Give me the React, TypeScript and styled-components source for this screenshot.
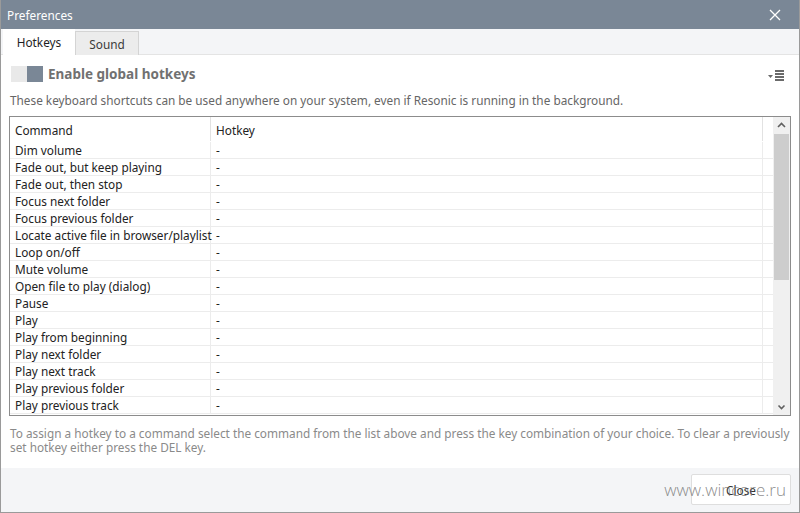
import styled, { createGlobalStyle } from "styled-components";

const GlobalStyle = createGlobalStyle`
  html, body {
    margin: 0;
    padding: 0;
    background: #ffffff;
  }
  body {
    font-family: "Noto Sans", "Open Sans", sans-serif;
  }
`;

const commands = [
  "Dim volume",
  "Fade out, but keep playing",
  "Fade out, then stop",
  "Focus next folder",
  "Focus previous folder",
  "Locate active file in browser/playlist",
  "Loop on/off",
  "Mute volume",
  "Open file to play (dialog)",
  "Pause",
  "Play",
  "Play from beginning",
  "Play next folder",
  "Play next track",
  "Play previous folder",
  "Play previous track",
];

const App = () => {
  return (
    <>
      <GlobalStyle />
      <Window>
        <TitleBar>
          <Title>Preferences</Title>
          <CloseX viewBox="0 0 12 12">
            <path d="M1 1 L11 11 M11 1 L1 11" />
          </CloseX>
        </TitleBar>
        <TabStrip>
          <Tab $active>Hotkeys</Tab>
          <Tab>Sound</Tab>
        </TabStrip>
        <Body>
          <HeadRow>
            <Toggle>
              <ToggleOff />
              <ToggleOn />
            </Toggle>
            <HeadLabel>Enable global hotkeys</HeadLabel>
            <MenuIcon viewBox="0 0 17 12">
              <path d="M0 5 L5 5 L2.5 8 Z" />
              <rect x="7" y="0" width="9" height="2" />
              <rect x="7" y="3" width="9" height="2" />
              <rect x="7" y="6" width="9" height="2" />
              <rect x="7" y="9" width="9" height="2" />
            </MenuIcon>
          </HeadRow>
          <Description>
            These keyboard shortcuts can be used anywhere on your system, even
            if Resonic is running in the background.
          </Description>
          <Table>
            <List>
              <HeaderRow>
                <HeaderCell $divider>Command</HeaderCell>
                <HeaderCell>Hotkey</HeaderCell>
              </HeaderRow>
              {commands.map((c) => (
                <Row key={c}>
                  <Cell $divider>{c}</Cell>
                  <Cell>-</Cell>
                </Row>
              ))}
            </List>
            <Scrollbar>
              <ScrollArrow viewBox="0 0 17 17">
                <path d="M5 10 L8.5 6.5 L12 10" />
              </ScrollArrow>
              <Thumb />
              <Track />
              <ScrollArrow viewBox="0 0 17 17">
                <path d="M5.5 7.5 L8.5 10.5 L11.5 7.5" />
              </ScrollArrow>
            </Scrollbar>
          </Table>
          <Note>
            To assign a hotkey to a command select the command from the list
            above and press the key combination of your choice. To clear a
            previously
            <br />
            set hotkey either press the DEL key.
          </Note>
        </Body>
        <ButtonBar>
          <CloseButton>Close</CloseButton>
        </ButtonBar>
        <Watermark>www.wincore.ru</Watermark>
      </Window>
    </>
  );
};

export default App;

const Watermark = styled.div`
  position: absolute;
  right: 13px;
  bottom: 11px;
  font-family: "Open Sans", "Noto Sans", sans-serif;
  font-weight: 300;
  font-size: 17px;
  color: rgba(110, 110, 110, 0.8);
  pointer-events: none;
`;
const CloseButton = styled.button`
  width: 100px;
  height: 31px;
  background: #ffffff;
  border: 1px solid #dedede;
  border-radius: 2px;
  font-family: "Noto Sans", sans-serif;
  font-size: 11.8px;
  color: #333;
  padding: 0;
`;
const ButtonBar = styled.div`
  height: 44px;
  background: #f4f5f7;
  display: flex;
  justify-content: flex-end;
  align-items: flex-start;
  padding: 6px 8px 0 0;
  box-sizing: border-box;
`;
const Note = styled.div`
  margin: 10px 0 0 1px;
  font-size: 11.8px;
  line-height: 14px;
  color: #8a8a8a;
  white-space: nowrap;
`;
const Track = styled.div`
  flex: 1;
`;
const Thumb = styled.div`
  height: 146px;
  margin: 0 1px;
  background: #cdcdcd;
`;
const ScrollArrow = styled.svg`
  width: 17px;
  height: 17px;
  display: block;
  fill: none;
  stroke: #606060;
  stroke-width: 1.6;
`;
const Scrollbar = styled.div`
  width: 17px;
  background: #f0f0f0;
  display: flex;
  flex-direction: column;
`;
const Cell = styled.div<{ $divider?: boolean }>`
  padding: 1px 0 0 5px;
  border-right: 1px solid #ececec;
  width: ${(p) => (p.$divider ? "195px" : "546px")};
  white-space: nowrap;
`;
const Row = styled.div`
  display: flex;
  height: 17px;
  line-height: 15px;
  border-bottom: 1px solid #ececec;
  box-sizing: border-box;
  font-size: 11.8px;
  color: #222;
`;
const HeaderCell = styled.div<{ $divider?: boolean }>`
  padding: 1px 0 0 5px;
  width: ${(p) => (p.$divider ? "195px" : "546px")};
  border-right: 1px solid #e2e2e2;
  height: 23px;
  line-height: 24px;
`;
const HeaderRow = styled.div`
  display: flex;
  height: 25px;
  font-size: 11.8px;
  color: #222;
`;
const List = styled.div`
  flex: 1;
  overflow: hidden;
`;
const Table = styled.div`
  display: flex;
  height: 300px;
  border: 1px solid #8c8c8c;
  box-sizing: border-box;
  margin-top: 7px;
  background: #fff;
`;
const Description = styled.div`
  margin: 10px 0 0 1px;
  font-size: 11.8px;
  line-height: 17px;
  color: #666;
  white-space: nowrap;
`;
const MenuIcon = styled.svg`
  width: 17px;
  height: 12px;
  margin: 4px 6px 0 auto;
  fill: #6a6a6a;
`;
const HeadLabel = styled.div`
  margin-left: 5px;
  font-size: 13.5px;
  font-weight: 700;
  color: #717171;
`;
const ToggleOn = styled.div`
  width: 16px;
  background: #7a8796;
`;
const ToggleOff = styled.div`
  width: 16px;
  background: #e9e9e9;
`;
const Toggle = styled.div`
  display: flex;
  height: 16px;
  margin-left: 2px;
`;
const HeadRow = styled.div`
  display: flex;
  align-items: center;
  margin-top: 11px;
  height: 16px;
`;
const Body = styled.div`
  flex: 1;
  background: #ffffff;
  padding: 0 8px;
`;
const Tab = styled.div<{ $active?: boolean }>`
  width: ${(p) => (p.$active ? "72px" : "64px")};
  height: ${(p) => (p.$active ? "26px" : "24px")};
  margin-top: ${(p) => (p.$active ? "0" : "2px")};
  background: ${(p) => (p.$active ? "#ffffff" : "#ececec")};
  border: ${(p) => (p.$active ? "none" : "1px solid #d4d4d4")};
  border-bottom: none;
  box-sizing: border-box;
  display: flex;
  align-items: center;
  justify-content: center;
  font-size: 11.8px;
  color: ${(p) => (p.$active ? "#1e1e1e" : "#3a3a3a")};
  position: relative;
  z-index: 1;
`;
const TabStrip = styled.div`
  display: flex;
  height: 26px;
  padding-left: 2px;
  background: #f4f5f7;
  box-shadow: inset 0 -1px 0 #e4e4e4;
`;
const CloseX = styled.svg`
  width: 12px;
  height: 12px;
  fill: none;
  stroke: #ffffff;
  stroke-width: 1.3;
  margin-right: 18px;
`;
const Title = styled.div`
  font-size: 11.8px;
  color: #ffffff;
  margin-left: 6px;
`;
const TitleBar = styled.div`
  height: 29px;
  background: #7a8796;
  display: flex;
  align-items: center;
  justify-content: space-between;
`;
const Window = styled.div`
  position: relative;
  width: 800px;
  height: 513px;
  border: 1px solid #9a9a9a;
  border-top: none;
  box-sizing: border-box;
  display: flex;
  flex-direction: column;
  overflow: hidden;
  background: #f4f5f7;
`;
